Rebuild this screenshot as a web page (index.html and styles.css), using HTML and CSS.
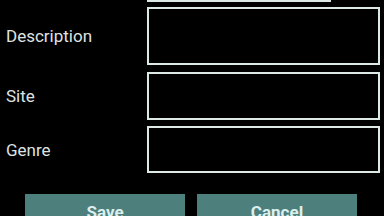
FILE: index.html
```html
<!DOCTYPE html>
<html lang="en">
<head>
    <meta charset="UTF-8">
    <meta name="viewport" content="width=device-width, initial-scale=1.0">
    <title>Edit Game</title>
    <link rel="stylesheet" href="styles.css">
</head>
<body>
    <div class="form">
        <div class="row">
            <span class="label"></span>
            <div class="field prev"></div>
        </div>
        <div class="row">
            <span class="label">Description</span>
            <div class="field desc"></div>
        </div>
        <div class="row">
            <span class="label">Site</span>
            <div class="field site"></div>
        </div>
        <div class="row">
            <span class="label">Genre</span>
            <div class="field genre"></div>
        </div>
        <div class="buttons">
            <button class="btn">Save</button>
            <button class="btn">Cancel</button>
        </div>
    </div>
</body>
</html>
```

FILE: styles.css
```css
html, body {
    margin: 0;
    background: #000;
    overflow: hidden;
}
.form {
    font-family: Roboto, "Liberation Sans", sans-serif;
    display: flex;
    flex-direction: column;
    width: 384px;
    height: 216px;
}
.row {
    display: flex;
    align-items: center;
    margin-bottom: 7px;
}
.label {
    width: 141px;
    padding-left: 6px;
    font-size: 17px;
    color: #dfe3e1;
}
.field {
    box-sizing: border-box;
    border: 2px solid #dde9e5;
    width: 233px;
}
.prev {
    width: 184px;
    height: 30px;
    margin-top: -28px;
}
.row:first-child {
    margin-bottom: 5px;
}
.desc {
    height: 58px;
}
.site {
    height: 48px;
    margin-bottom: -1px;
}
.genre {
    height: 47px;
}
.buttons {
    display: flex;
    gap: 12px;
    padding-left: 25px;
    margin-top: 14px;
}
.btn {
    width: 160px;
    height: 40px;
    border: none;
    border-radius: 0;
    background: #4d7f7c;
    color: #dcefee;
    font-family: Roboto, "Liberation Sans", sans-serif;
    font-weight: bold;
    font-size: 17px;
    padding: 8px 0 0;
    text-align: center;
    display: flex;
    justify-content: center;
    align-items: flex-start;
}
```
